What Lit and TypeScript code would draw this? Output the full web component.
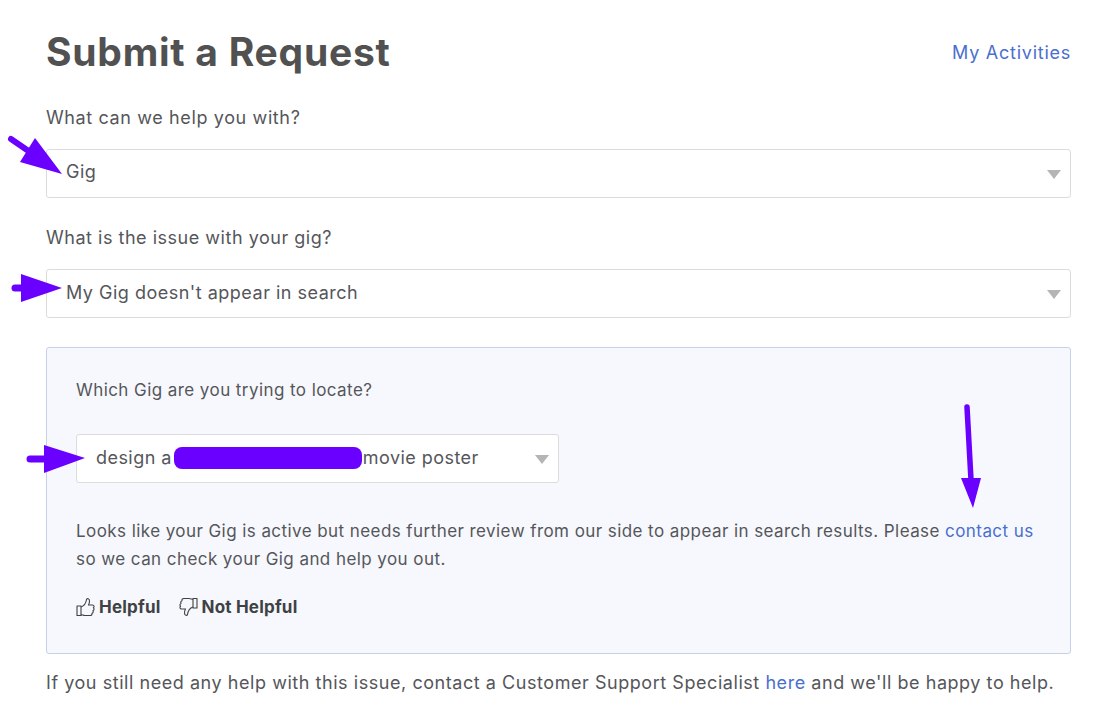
import { LitElement, html, css, svg } from "lit";
import { customElement } from "lit/decorators.js";

const chevron = html`<span class="caret"></span>`;

@customElement("app-root")
export class AppRoot extends LitElement {
  static styles = css`
    :host {
      display: block;
      position: relative;
      width: 1101px;
      height: 712px;
      overflow: hidden;
      background: #fff;
      box-sizing: border-box;
      padding: 28px 30px 0 46px;
      font-family: "Inter", "Liberation Sans", sans-serif;
      font-size: 18px;
      letter-spacing: 0.55px;
      color: #55565a;
    }
    .head {
      display: flex;
      justify-content: space-between;
      align-items: center;
      height: 48px;
    }
    h1 {
      margin: 0;
      font-size: 39px;
      font-weight: 700;
      letter-spacing: 0.75px;
      line-height: 48px;
      color: #515151;
    }
    a {
      color: #4a6fcf;
      text-decoration: none;
    }
    .head a {
      letter-spacing: 0.75px;
    }
    .label {
      margin-top: 29px;
      line-height: 26px;
      letter-spacing: 0.62px;
    }
    .label.second {
      margin-top: 27px;
      letter-spacing: 0.52px;
    }
    .select {
      display: flex;
      align-items: center;
      justify-content: space-between;
      box-sizing: border-box;
      height: 49px;
      margin-top: 18px;
      padding: 0 9px 2px 19px;
      background: #fff;
      border: 1px solid #dcdcdc;
      border-radius: 3px;
      letter-spacing: 0.5px;
    }
    .select.top {
      padding-bottom: 4px;
    }
    .caret {
      width: 0;
      height: 0;
      border-left: 7px solid transparent;
      border-right: 7px solid transparent;
      border-top: 9px solid #b5b5b5;
      margin-top: 3px;
    }
    .select.top .caret {
      margin-top: 5px;
    }
    .box {
      box-sizing: border-box;
      height: 307px;
      margin-top: 29px;
      padding: 29px 30px 0 29px;
      background: #f6f8fd;
      border: 1px solid #c5d0ea;
      border-radius: 3px;
    }
    .q {
      line-height: 26px;
      font-size: 17px;
      letter-spacing: 0.43px;
    }
    .box .select {
      width: 483px;
      margin-top: 31px;
      letter-spacing: 0.45px;
    }
    .redact {
      display: inline-block;
      width: 188px;
      height: 22px;
      margin: 0 1px 0 2px;
      vertical-align: -5px;
      border-radius: 8px;
      background: #6a00ff;
    }
    .copy {
      margin: 34px 0 0;
      line-height: 28px;
      font-size: 17px;
      letter-spacing: 0.43px;
    }
    .votes {
      display: flex;
      gap: 18px;
      margin-top: 20px;
      font-size: 17px;
      font-weight: 700;
      letter-spacing: 0.2px;
      color: #404145;
      line-height: 28px;
    }
    .vote {
      display: flex;
      align-items: center;
      gap: 4px;
    }
    .vote svg {
      width: 19px;
      height: 20px;
      fill: none;
      stroke: #404145;
      stroke-width: 1.1;
      stroke-linejoin: round;
    }
    .foot {
      margin: 15px 0 0;
      line-height: 28px;
      letter-spacing: 0.55px;
      white-space: nowrap;
    }
    .arrows {
      position: absolute;
      inset: 0;
      width: 1101px;
      height: 712px;
      pointer-events: none;
    }
  `;

  render() {
    return html`
      <div class="head">
        <h1>Submit a Request</h1>
        <a href="#">My Activities</a>
      </div>
      <div class="label">What can we help you with?</div>
      <div class="select top"><span>Gig</span>${chevron}</div>
      <div class="label second">What is the issue with your gig?</div>
      <div class="select"><span>My Gig doesn't appear in search</span>${chevron}</div>
      <div class="box">
        <div class="q">Which Gig are you trying to locate?</div>
        <div class="select">
          <span>design a<span class="redact"></span>movie poster</span>${chevron}
        </div>
        <p class="copy">
          Looks like your Gig is active but needs further review from our side to appear in search results. Please
          <a href="#">contact us</a> so we can check your Gig and help you out.
        </p>
        <div class="votes">
          <span class="vote">
            <svg viewBox="0 0 19 20">
              <rect x="1" y="9" width="4" height="9.5"></rect>
              <path d="M5 10 C8 9 10 6 10.5 2.5 C11 1 13.5 1.5 13.5 4 C13.5 6 12.8 7.5 12.5 8 L16.5 8 C18.2 8 18.6 10 17.4 10.8 C18.4 11.6 18.2 13.2 17 13.6 C17.6 14.6 17 16 16 16.2 C16.3 17.4 15.6 18.5 14.2 18.5 L9 18.5 C7.4 18.5 6.4 17.8 5 17.6"></path>
            </svg>
            Helpful
          </span>
          <span class="vote">
            <svg viewBox="0 0 19 20">
              <rect x="14" y="1.5" width="4" height="9.5"></rect>
              <path d="M14 10 C11 11 9 14 8.5 17.5 C8 19 5.5 18.5 5.5 16 C5.5 14 6.2 12.5 6.5 12 L2.5 12 C0.8 12 0.4 10 1.6 9.2 C0.6 8.4 0.8 6.8 2 6.4 C1.4 5.4 2 4 3 3.8 C2.7 2.6 3.4 1.5 4.8 1.5 L10 1.5 C11.6 1.5 12.6 2.2 14 2.4"></path>
            </svg>
            Not Helpful
          </span>
        </div>
      </div>
      <p class="foot">
        If you still need any help with this issue, contact a Customer Support Specialist
        <a href="#">here</a> and we'll be happy to help.
      </p>
      <svg class="arrows" viewBox="0 0 1101 712">
        ${svg`
          <g fill="#6a00ff" stroke="none">
            <path d="M35 138 L62 174 L20 162 Z"></path>
            <path d="M21 274 L62 288 L21 302 Z"></path>
            <path d="M44 445 L85 458 L44 473 Z"></path>
            <path d="M961 478 L981 478 L973 508 Z"></path>
          </g>
          <g stroke="#6a00ff" fill="none" stroke-linecap="round">
            <path d="M11 139 L30 152" stroke-width="6"></path>
            <path d="M15 288 L24 288" stroke-width="7"></path>
            <path d="M30 459 L46 459" stroke-width="7"></path>
            <path d="M967 407 L971 480" stroke-width="5.5"></path>
          </g>
        `}
      </svg>
    `;
  }
}
